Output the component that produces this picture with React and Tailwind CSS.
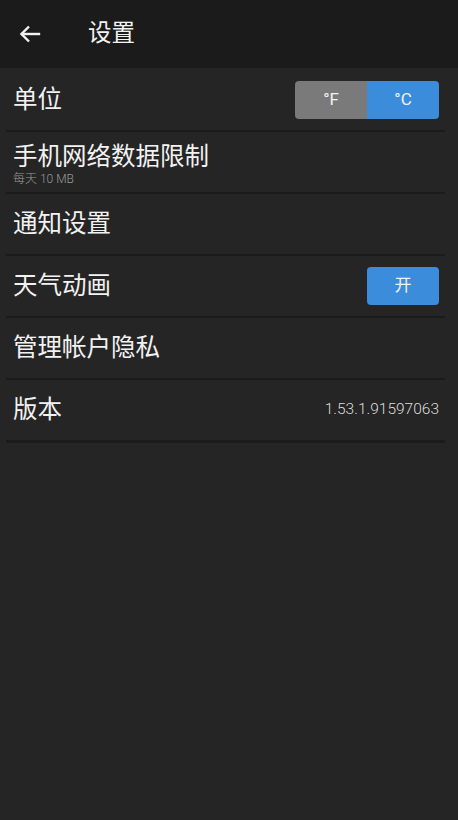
import React from "react";

const font = { fontFamily: 'Roboto, "Noto Sans CJK SC", sans-serif' };

function Sep({ thick }) {
  return <div className={`ml-[6px] mr-[13px] ${thick ? "h-[3px]" : "h-[2px]"} bg-[#1b1b1b]`} />;
}

function Row({ children, right }) {
  return (
    <div className="h-[60px] flex items-center justify-between pl-[13px] pr-[19px]">
      <div className="flex flex-col">{children}</div>
      {right}
    </div>
  );
}

export default function App() {
  return (
    <div className="w-[458px] h-[820px] bg-[#252525] text-[#f2f2f2] flex flex-col" style={font}>
      <div className="h-[68px] bg-[#1b1b1b] flex items-center shrink-0">
        <div className="w-[88px] pl-[18px] flex items-center">
          <svg width="24" height="24" viewBox="0 0 24 24" fill="none" stroke="#f2f2f2" strokeWidth="2.4" strokeLinecap="square">
            <path d="M21 12H4" />
            <path d="M11 4.5L3.5 12L11 19.5" strokeLinecap="butt" />
          </svg>
        </div>
        <span className="text-[23.5px] leading-none">设置</span>
      </div>
      <div className="h-[2px]" />
      <Row
        right={
          <div className="flex h-[38px] w-[144px] rounded-[4px] overflow-hidden text-[17px]">
            <div className="flex-1 bg-[#7a7a7a] flex items-center justify-center">°F</div>
            <div className="flex-1 bg-[#3b8ddb] flex items-center justify-center">°C</div>
          </div>
        }
      >
        <span className="text-[24.5px] leading-none">单位</span>
      </Row>
      <Sep />
      <Row>
        <span className="text-[24.5px] leading-none mt-[6px]">手机网络数据限制</span>
        <span className="text-[12px] leading-none text-[#9a9a9a] mt-[3px] font-light">每天 10 MB</span>
      </Row>
      <Sep />
      <Row>
        <span className="text-[24.5px] leading-none">通知设置</span>
      </Row>
      <Sep />
      <Row
        right={
          <div className="h-[38px] w-[72px] rounded-[4px] bg-[#3b8ddb] flex items-center justify-center text-[17px]">开</div>
        }
      >
        <span className="text-[24.5px] leading-none">天气动画</span>
      </Row>
      <Sep />
      <Row>
        <span className="text-[24.5px] leading-none">管理帐户隐私</span>
      </Row>
      <Sep />
      <Row right={<span className="text-[15.5px] font-light text-[#dcdcdc]">1.53.1.91597063</span>}>
        <span className="text-[24.5px] leading-none">版本</span>
      </Row>
      <Sep thick />
    </div>
  );
}
